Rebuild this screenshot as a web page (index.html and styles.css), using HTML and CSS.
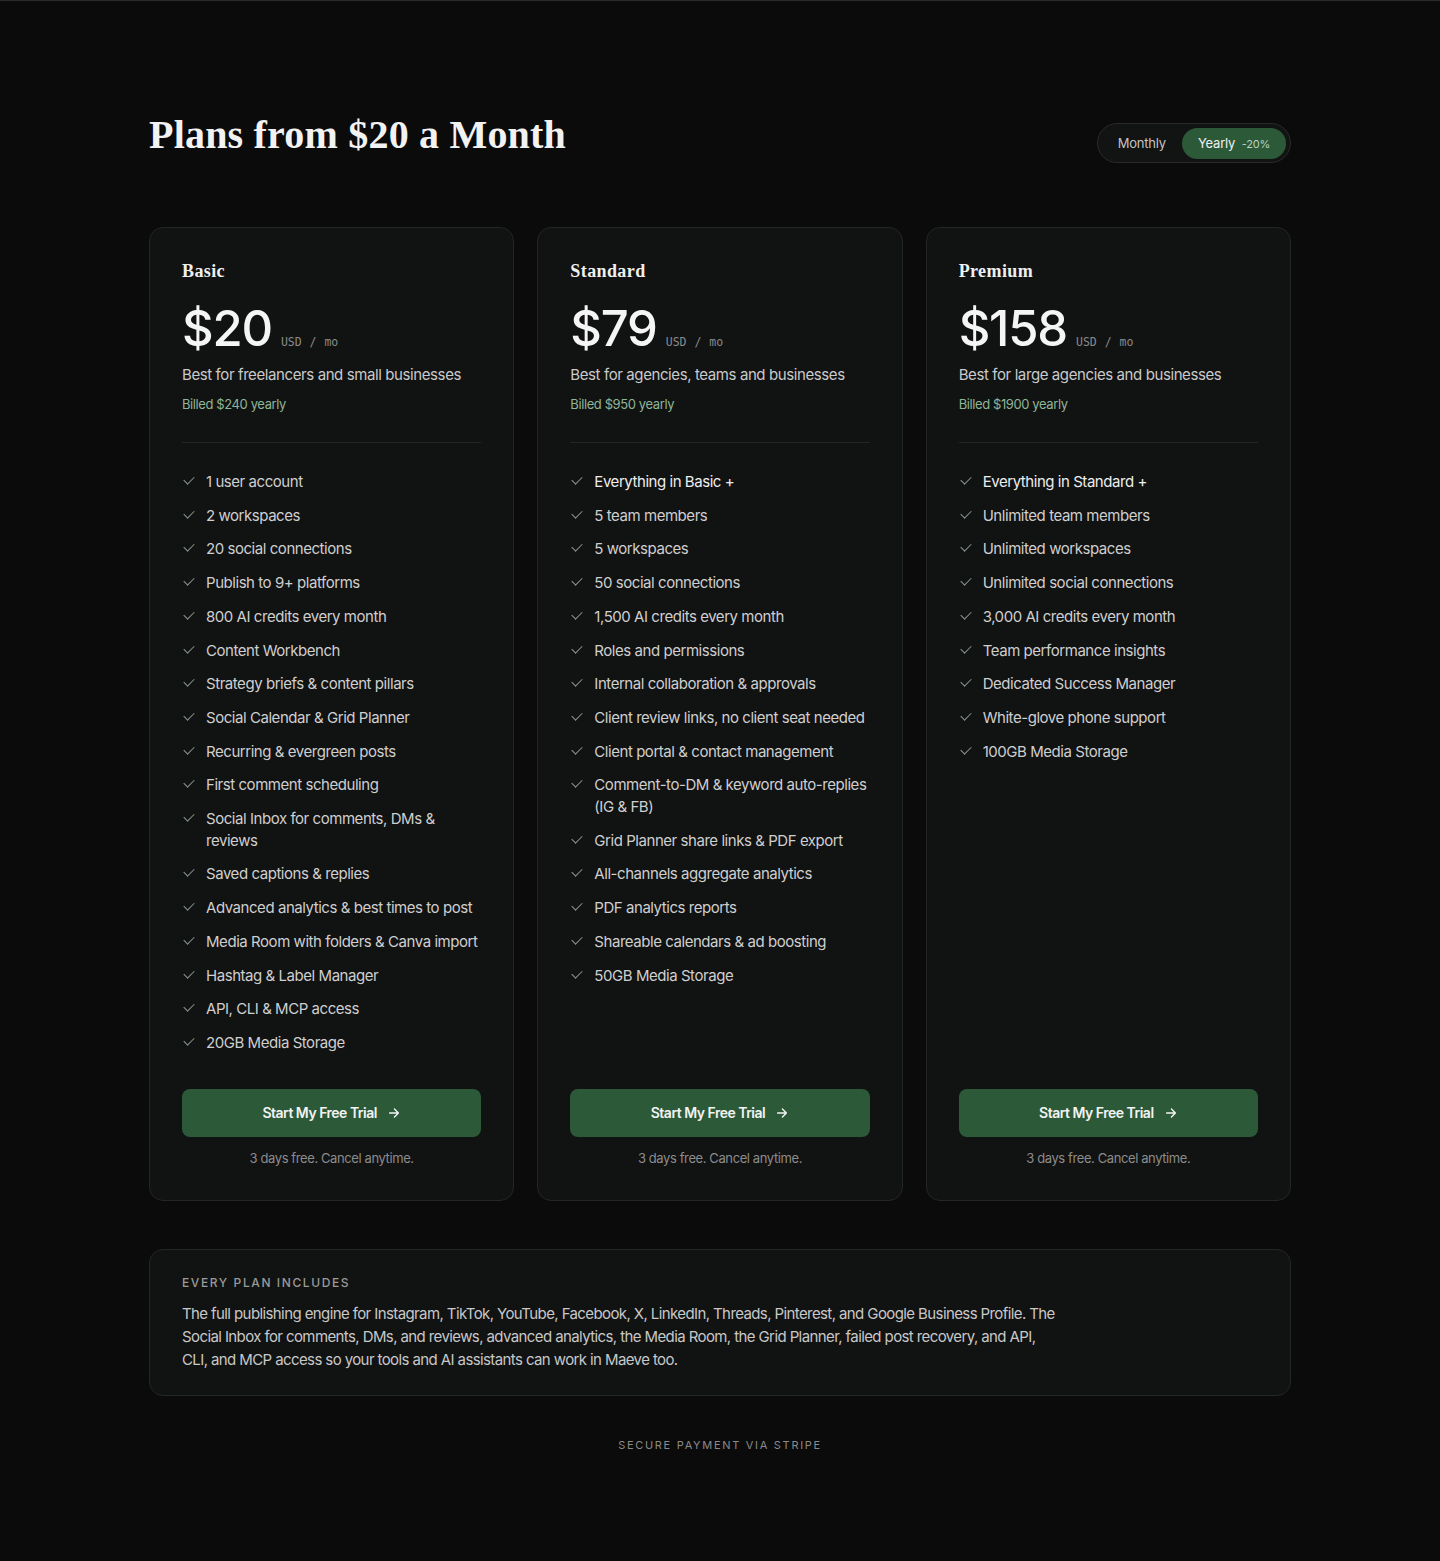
FILE: index.html
```html
<!DOCTYPE html>
<html lang="en">
<head>
<meta charset="utf-8">
<title>Pricing</title>
<link rel="stylesheet" href="styles.css">
</head>
<body>
<main class="page">
  <header class="top">
    <h1 class="title">Plans from $20 a Month</h1>
    <div class="toggle">
      <span class="opt">Monthly</span>
      <span class="opt active">Yearly <span class="off">-20%</span></span>
    </div>
  </header>

  <section class="cards">
    <article class="card">
      <h2 class="name">Basic</h2>
      <div class="price"><span class="amount">$20</span><span class="unit">USD / mo</span></div>
      <p class="desc">Best for freelancers and small businesses</p>
      <p class="billed">Billed $240 yearly</p>
      <hr class="rule">
      <ul class="features">
        <li>1 user account</li>
        <li>2 workspaces</li>
        <li>20 social connections</li>
        <li>Publish to 9+ platforms</li>
        <li>800 AI credits every month</li>
        <li>Content Workbench</li>
        <li>Strategy briefs &amp; content pillars</li>
        <li>Social Calendar &amp; Grid Planner</li>
        <li>Recurring &amp; evergreen posts</li>
        <li>First comment scheduling</li>
        <li>Social Inbox for comments, DMs &amp; reviews</li>
        <li>Saved captions &amp; replies</li>
        <li>Advanced analytics &amp; best times to post</li>
        <li>Media Room with folders &amp; Canva import</li>
        <li>Hashtag &amp; Label Manager</li>
        <li>API, CLI &amp; MCP access</li>
        <li>20GB Media Storage</li>
      </ul>
      <a class="cta" href="#">Start My Free Trial <svg class="arrow" viewBox="0 0 16 16" width="14" height="14"><path d="M3 8h10M8.5 3.5L13 8l-4.5 4.5" fill="none" stroke="currentColor" stroke-width="1.6" stroke-linecap="round" stroke-linejoin="round"/></svg></a>
      <p class="note">3 days free. Cancel anytime.</p>
    </article>

    <article class="card">
      <h2 class="name">Standard</h2>
      <div class="price"><span class="amount">$79</span><span class="unit">USD / mo</span></div>
      <p class="desc">Best for agencies, teams and businesses</p>
      <p class="billed">Billed $950 yearly</p>
      <hr class="rule">
      <ul class="features">
        <li class="strong">Everything in Basic +</li>
        <li>5 team members</li>
        <li>5 workspaces</li>
        <li>50 social connections</li>
        <li>1,500 AI credits every month</li>
        <li>Roles and permissions</li>
        <li>Internal collaboration &amp; approvals</li>
        <li>Client review links, no client seat needed</li>
        <li>Client portal &amp; contact management</li>
        <li>Comment-to-DM &amp; keyword auto-replies (IG &amp; FB)</li>
        <li>Grid Planner share links &amp; PDF export</li>
        <li>All-channels aggregate analytics</li>
        <li>PDF analytics reports</li>
        <li>Shareable calendars &amp; ad boosting</li>
        <li>50GB Media Storage</li>
      </ul>
      <a class="cta" href="#">Start My Free Trial <svg class="arrow" viewBox="0 0 16 16" width="14" height="14"><path d="M3 8h10M8.5 3.5L13 8l-4.5 4.5" fill="none" stroke="currentColor" stroke-width="1.6" stroke-linecap="round" stroke-linejoin="round"/></svg></a>
      <p class="note">3 days free. Cancel anytime.</p>
    </article>

    <article class="card">
      <h2 class="name">Premium</h2>
      <div class="price"><span class="amount">$158</span><span class="unit">USD / mo</span></div>
      <p class="desc">Best for large agencies and businesses</p>
      <p class="billed">Billed $1900 yearly</p>
      <hr class="rule">
      <ul class="features">
        <li class="strong">Everything in Standard +</li>
        <li>Unlimited team members</li>
        <li>Unlimited workspaces</li>
        <li>Unlimited social connections</li>
        <li>3,000 AI credits every month</li>
        <li>Team performance insights</li>
        <li>Dedicated Success Manager</li>
        <li>White-glove phone support</li>
        <li>100GB Media Storage</li>
      </ul>
      <a class="cta" href="#">Start My Free Trial <svg class="arrow" viewBox="0 0 16 16" width="14" height="14"><path d="M3 8h10M8.5 3.5L13 8l-4.5 4.5" fill="none" stroke="currentColor" stroke-width="1.6" stroke-linecap="round" stroke-linejoin="round"/></svg></a>
      <p class="note">3 days free. Cancel anytime.</p>
    </article>
  </section>

  <section class="includes">
    <h3 class="inc-label">EVERY PLAN INCLUDES</h3>
    <p class="inc-text">The full publishing engine for Instagram, TikTok, YouTube, Facebook, X, LinkedIn, Threads, Pinterest, and Google Business Profile. The<br>Social Inbox for comments, DMs, and reviews, advanced analytics, the Media Room, the Grid Planner, failed post recovery, and API,<br>CLI, and MCP access so your tools and AI assistants can work in Maeve too.</p>
  </section>

  <p class="secure">SECURE PAYMENT VIA STRIPE</p>
</main>
</body>
</html>
```

FILE: styles.css
```css
* { box-sizing: border-box; }
html, body { margin: 0; padding: 0; }
body {
  background: #0b0b0b;
  color: #e6e6e6;
  font-family: Inter, "Noto Sans", sans-serif;
  border-top: 1px solid #2a2a2a;
  min-height: 1561px;
}
.page {
  width: 1142px;
  margin: 0 auto;
  padding-top: 104px;
  padding-bottom: 100px;
}
.top {
  display: flex;
  justify-content: space-between;
  align-items: center;
  margin-bottom: 62px;
}
.title {
  margin: 0;
  font-family: "Liberation Serif", "DejaVu Serif", serif;
  font-weight: 700;
  font-size: 40px;
  line-height: 60px;
  color: #f2f2f2;
  letter-spacing: 0.2px;
}
.toggle {
  display: flex;
  align-items: center;
  height: 40px;
  padding: 4px;
  border: 1px solid #2a2a2a;
  border-radius: 20px;
  background: #121313;
  margin-top: 16px;
}
.opt {
  font-size: 13px;
  color: #c4c4c4;
  padding: 0 16px 0 16px;
  line-height: 30px;
  border-radius: 16px;
  letter-spacing: -0.2px;
}
.opt.active {
  background: #2c5a39;
  color: #f0f0f0;
  padding: 0 16px;
}
.off {
  font-size: 11px;
  color: #b9d1bf;
  margin-left: 3px;
}
.cards {
  display: grid;
  grid-template-columns: repeat(3, 1fr);
  gap: 23px;
}
.card {
  display: flex;
  flex-direction: column;
  background: #111212;
  border: 1px solid #242525;
  border-radius: 14px;
  padding: 31px 32px 33px;
}
.name {
  margin: 0;
  font-family: "Liberation Serif", "DejaVu Serif", serif;
  font-weight: 700;
  font-size: 18px;
  line-height: 24px;
  color: #f0f0f0;
  letter-spacing: 0.4px;
}
.price {
  display: flex;
  align-items: baseline;
  margin-top: 16px;
  height: 62px;
}
.amount {
  font-size: 49px;
  font-weight: 500;
  color: #f5f5f5;
  letter-spacing: -1.2px;
  line-height: 60px;
}
.unit {
  font-family: "DejaVu Sans Mono", "Liberation Mono", monospace;
  font-size: 11.5px;
  color: #8a8a8a;
  margin-left: 9px;
  word-spacing: 1px;
}
.desc {
  margin: 3px 0 0;
  font-size: 15px;
  line-height: 22px;
  color: #cacaca;
  letter-spacing: -0.4px;
}
.billed {
  margin: 8px 0 0;
  font-size: 13px;
  line-height: 20px;
  color: #8fb597;
  letter-spacing: -0.4px;
}
.rule {
  border: 0;
  border-top: 1px solid #242525;
  margin: 28px 0 28px;
}
.features {
  list-style: none;
  margin: 0;
  padding: 0;
  flex: 1;
  display: flex;
  flex-direction: column;
  gap: 12px;
}
.features li {
  position: relative;
  padding-left: 24px;
  font-size: 15px;
  line-height: 21.7px;
  color: #cfcfcf;
  letter-spacing: -0.45px;
}
.features li::before {
  content: "";
  position: absolute;
  left: 2px;
  top: 5px;
  width: 9px;
  height: 5px;
  border-left: 1.3px solid #8a968d;
  border-bottom: 1.3px solid #8a968d;
  transform: rotate(-45deg);
}
.features li.strong { color: #ededed; }
.cta {
  display: flex;
  align-items: center;
  justify-content: center;
  gap: 10px;
  height: 48px;
  margin-top: 35px;
  border-radius: 8px;
  background: #2c5a39;
  color: #f3f3f3;
  font-size: 14px;
  font-weight: 600;
  text-decoration: none;
  letter-spacing: -0.5px;
}
.arrow { display: block; }
.note {
  margin: 12px 0 0;
  text-align: center;
  font-size: 13px;
  line-height: 18px;
  color: #8c8c8c;
  letter-spacing: -0.4px;
}
.includes {
  margin-top: 48px;
  background: #111212;
  border: 1px solid #242525;
  border-radius: 14px;
  padding: 25px 32px 24px;
}
.inc-label {
  margin: 0;
  font-size: 12px;
  font-weight: 500;
  letter-spacing: 1.6px;
  color: #9a9a9a;
  line-height: 16px;
}
.inc-text {
  margin: 11px 0 0;
  font-size: 15px;
  line-height: 23px;
  color: #c8c8c8;
  letter-spacing: -0.6px;
  white-space: nowrap;
}
.secure {
  margin: 42px 0 0;
  text-align: center;
  font-size: 11px;
  letter-spacing: 1.7px;
  color: #8a8a8a;
}
```
